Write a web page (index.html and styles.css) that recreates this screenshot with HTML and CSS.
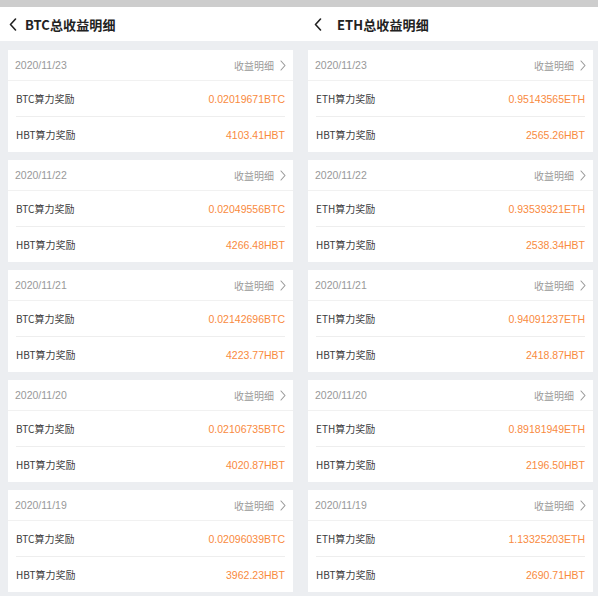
FILE: index.html
```html
<!DOCTYPE html>
<html lang="zh">
<head>
<meta charset="utf-8">
<link rel="stylesheet" href="styles.css">
</head>
<body>
<div class="topbar"></div>
<div class="header">
  <div class="head-col head-left">
    <svg class="back" width="8" height="13" viewBox="0 0 8 13"><path d="M6.5 1 L1.5 6.5 L6.5 12" fill="none" stroke="#222" stroke-width="1.6" stroke-linecap="round" stroke-linejoin="round"/></svg>
    <span class="title">BTC总收益明细</span>
  </div>
  <div class="head-col head-right">
    <svg class="back" width="8" height="13" viewBox="0 0 8 13"><path d="M6.5 1 L1.5 6.5 L6.5 12" fill="none" stroke="#222" stroke-width="1.6" stroke-linecap="round" stroke-linejoin="round"/></svg>
    <span class="title">ETH总收益明细</span>
  </div>
</div>
<div class="columns" id="cols"></div>
<script src="app.js"></script>
</body>
</html>
```

FILE: app.js
```js
const left = [
  ["2020/11/23","0.02019671BTC","4103.41HBT"],
  ["2020/11/22","0.02049556BTC","4266.48HBT"],
  ["2020/11/21","0.02142696BTC","4223.77HBT"],
  ["2020/11/20","0.02106735BTC","4020.87HBT"],
  ["2020/11/19","0.02096039BTC","3962.23HBT"]
];
const right = [
  ["2020/11/23","0.95143565ETH","2565.26HBT"],
  ["2020/11/22","0.93539321ETH","2538.34HBT"],
  ["2020/11/21","0.94091237ETH","2418.87HBT"],
  ["2020/11/20","0.89181949ETH","2196.50HBT"],
  ["2020/11/19","1.13325203ETH","2690.71HBT"]
];
const chev = '<svg class="chev" width="6" height="11" viewBox="0 0 6 11"><path d="M1 1 L5 5.5 L1 10" fill="none" stroke="#999" stroke-width="1.1" stroke-linecap="round" stroke-linejoin="round"/></svg>';
function col(data, coin) {
  const c = document.createElement("div");
  c.className = "col";
  data.forEach(d => {
    c.insertAdjacentHTML("beforeend",
      '<div class="card">' +
        '<div class="date-row"><span class="date">' + d[0] + '</span><span class="more">收益明细' + chev + '</span></div>' +
        '<div class="row"><span class="label">' + coin + '算力奖励</span><span class="val">' + d[1] + '</span></div>' +
        '<div class="row"><span class="label">HBT算力奖励</span><span class="val">' + d[2] + '</span></div>' +
      '</div>');
  });
  return c;
}
const cols = document.getElementById("cols");
cols.appendChild(col(left, "BTC"));
cols.appendChild(col(right, "ETH"));
```

FILE: styles.css
```css
* { box-sizing: border-box; }
html, body { margin: 0; padding: 0; }
body {
  width: 598px;
  height: 596px;
  overflow: hidden;
  background: #eceef1;
  font-family: "Noto Sans CJK SC", "Noto Sans", sans-serif;
}
.topbar { height: 7px; background: #cdcdcd; }
.header {
  height: 34px;
  background: #fff;
  display: grid;
  grid-template-columns: 300px 298px;
}
.head-col { display: flex; align-items: center; }
.head-left { padding-left: 9px; gap: 8px; }
.head-right { padding-left: 14px; gap: 15px; }
.back { display: block; }
.title { font-size: 13px; font-weight: 700; color: #222; letter-spacing: 0.1px; }
.columns {
  display: grid;
  grid-template-columns: 285px 285px;
  column-gap: 15px;
  padding: 9px 5px 0 8px;
}
.col { display: flex; flex-direction: column; gap: 8px; }
.card { background: #fff; height: 102px; display: flex; flex-direction: column; }
.date-row {
  height: 31px;
  display: flex;
  align-items: center;
  justify-content: space-between;
  padding: 0 7px 0 7px;
  border-bottom: 1px solid #f1f1f1;
}
.date { font-size: 10.5px; color: #999; font-family: "Liberation Sans", "Noto Sans CJK SC", sans-serif; }
.more { font-size: 10px; color: #999; display: flex; align-items: center; gap: 6px; }
.chev { display: block; }
.row {
  height: 35px;
  margin: 0 8px;
  display: flex;
  align-items: center;
  justify-content: space-between;
}
.row + .row { border-top: 1px solid #eeeeee; height: 36px; }
.label { font-size: 10px; color: #3c3c3c; }
.val { font-size: 10.5px; color: #f98a40; font-family: "Liberation Sans", "Noto Sans CJK SC", sans-serif; }
```
